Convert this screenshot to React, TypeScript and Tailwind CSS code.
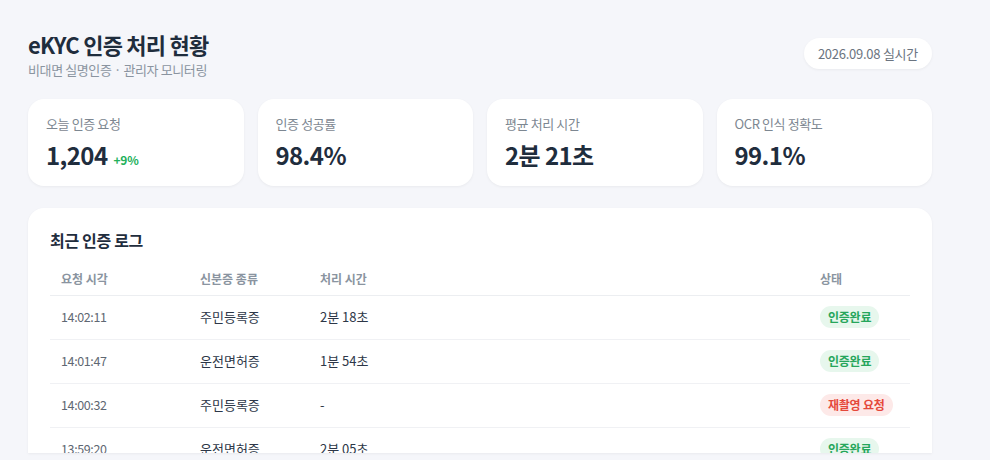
const stats = [
  { label: "오늘 인증 요청", value: "1,204", delta: "+9%" },
  { label: "인증 성공률", value: "98.4%" },
  { label: "평균 처리 시간", value: "2분 21초" },
  { label: "OCR 인식 정확도", value: "99.1%" },
];

type Row = { time: string; doc: string; dur: string; ok: boolean };

const rows: Row[] = [
  { time: "14:02:11", doc: "주민등록증", dur: "2분 18초", ok: true },
  { time: "14:01:47", doc: "운전면허증", dur: "1분 54초", ok: true },
  { time: "14:00:32", doc: "주민등록증", dur: "-", ok: false },
  { time: "13:59:20", doc: "운전면허증", dur: "2분 05초", ok: true },
];

export default function App() {
  return (
    <div
      className="h-[460px] overflow-hidden bg-[#f5f6fa] text-[#1f2d3d]"
      style={{ fontFamily: '"Noto Sans CJK KR", "Noto Sans", sans-serif' }}
    >
      <div className="ml-7 flex h-full w-[904px] flex-col pt-[28px] pb-[7px]">
        {/* Header */}
        <div className="flex items-start justify-between">
          <div>
            <h1 className="text-[22px] font-bold leading-[32px] tracking-[-0.035em] text-[#1f2d3d]">
              eKYC 인증 처리 현황
            </h1>
            <p className="mt-[1px] text-[13px] leading-[18px] tracking-[-0.03em] text-[#8a94a0]">
              비대면 실명인증 · 관리자 모니터링
            </p>
          </div>
          <div className="mt-[10px] flex h-[31px] items-center rounded-full bg-white px-[14px] text-[13px] tracking-[-0.02em] text-[#6b7480] shadow-[0_1px_3px_rgba(0,0,0,0.05)]">
            2026.09.08 실시간
          </div>
        </div>

        {/* Stat cards */}
        <div className="mt-[20px] grid grid-cols-4 gap-[14px]">
          {stats.map((s) => (
            <div
              key={s.label}
              className="h-[87px] rounded-[16px] bg-white px-[18px] pt-[16px] shadow-[0_1px_3px_rgba(0,0,0,0.05)]"
            >
              <div className="text-[13px] leading-[18px] tracking-[-0.03em] text-[#7d8791]">
                {s.label}
              </div>
              <div className="mt-[6px] flex items-baseline gap-[6px]">
                <span className="text-[24px] font-bold leading-[32px] tracking-[-0.025em] text-[#1f2d3d]">
                  {s.value}
                </span>
                {s.delta && (
                  <span className="text-[12px] font-semibold tracking-[-0.02em] text-[#22b05a]">
                    {s.delta}
                  </span>
                )}
              </div>
            </div>
          ))}
        </div>

        {/* Log table */}
        <div className="mt-[22px] flex-1 overflow-hidden rounded-t-[16px] bg-white px-[22px] pt-[20px] shadow-[0_1px_3px_rgba(0,0,0,0.05)]">
          <h2 className="text-[16px] font-bold leading-[24px] tracking-[-0.02em] text-[#1f2d3d]">
            최근 인증 로그
          </h2>
          <table className="mt-[13px] w-full border-collapse text-left">
            <thead>
              <tr className="border-b border-[#eceef1] text-[12px] font-semibold text-[#8a94a0]">
                <th className="h-[30px] w-[139px] px-[11px] pb-[2px] font-semibold">요청 시각</th>
                <th className="w-[120px] px-[11px] pb-[2px] font-semibold">신분증 종류</th>
                <th className="px-[11px] pb-[2px] font-semibold">처리 시간</th>
                <th className="w-[101px] px-[11px] pb-[2px] font-semibold">상태</th>
              </tr>
            </thead>
            <tbody>
              {rows.map((r) => (
                <tr key={r.time} className="h-[44px] border-b border-[#f0f1f4] text-[13px]">
                  <td className="px-[11px] text-[12.5px] tabular-nums tracking-[-0.03em] text-[#5f6873]">{r.time}</td>
                  <td className="px-[11px] text-[#2d3748]">{r.doc}</td>
                  <td className="px-[11px] text-[#2d3748]">{r.dur}</td>
                  <td className="px-[11px]">
                    {r.ok ? (
                      <span className="inline-flex h-[22px] items-center rounded-full bg-[#e7f7ed] px-[8px] text-[12px] font-bold tracking-[-0.02em] text-[#26a65b]">
                        인증완료
                      </span>
                    ) : (
                      <span className="inline-flex h-[22px] items-center rounded-full bg-[#fde9e8] px-[8px] text-[12px] font-bold tracking-[-0.02em] text-[#e5483b]">
                        재촬영 요청
                      </span>
                    )}
                  </td>
                </tr>
              ))}
            </tbody>
          </table>
        </div>
      </div>
    </div>
  );
}
